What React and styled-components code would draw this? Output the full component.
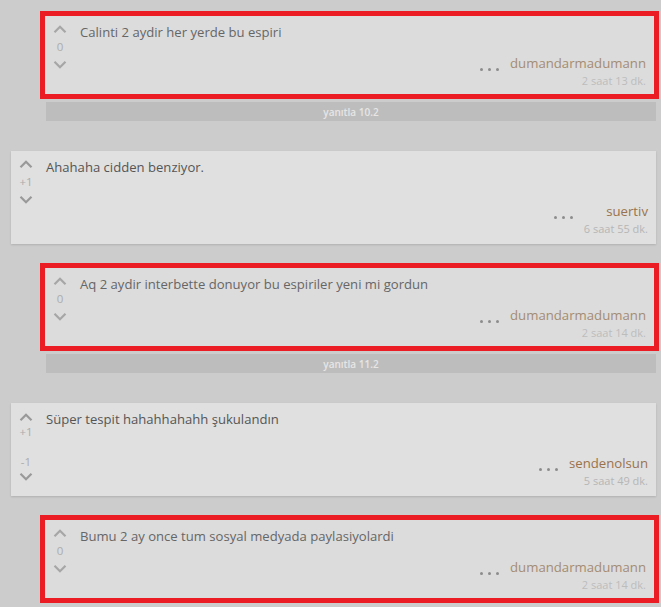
import React from "react";
import styled, { createGlobalStyle } from "styled-components";

const Global = createGlobalStyle`
  html, body { margin: 0; padding: 0; background: #cccccc; }
  body { font-family: "Open Sans", "Noto Sans", sans-serif; }
`;

const Page = styled.div`
  padding: 11px 5px 0 11px;
  display: flex;
  flex-direction: column;
  height: 607px;
  overflow: hidden;
  box-sizing: border-box;
  & > * { flex-shrink: 0; }
`;

const ReplyGroup = styled.div`
  padding-left: 35px;
  margin-bottom: 30px;
  display: flex;
  flex-direction: column;
`;

const Highlight = styled.div`
  margin-left: -6px;
  margin-right: -3px;
  border: 5px solid #ec1c24;
`;

const Card = styled.div`
  display: grid;
  grid-template-columns: 30px 1fr;
  column-gap: 5px;
  background: ${(p) => (p.$reply ? "#dcdcdc" : "#e0e0e0")};
  height: ${(p) => (p.$reply ? "78px" : "93px")};
  box-sizing: border-box;
  padding: 7px 8px 0 0;
  margin-bottom: ${(p) => (p.$reply ? "0" : "19px")};
  box-shadow: ${(p) => (p.$reply ? "none" : "0 1px 2px rgba(0,0,0,0.14)")};
`;

const VoteColumn = styled.div`
  display: flex;
  flex-direction: column;
  align-items: center;
  padding-top: ${(p) => (p.$split ? "2px" : "1px")};
  gap: ${(p) => (p.$split ? "3px" : "6px")};
`;

const Arrow = styled.svg`
  width: 14px;
  height: 10px;
  display: block;
  color: ${(p) => (p.$light ? "#a6a6a6" : "#999999")};
`;

const Count = styled.span`
  font-size: 11.5px;
  line-height: 14px;
  color: #acacac;
`;

const Spacer = styled.div`
  height: 10px;
`;

const Body = styled.div`
  display: flex;
  flex-direction: column;
  min-width: 0;
`;

const Text = styled.p`
  margin: 0;
  font-size: 13.1px;
  line-height: 18px;
  color: ${(p) => (p.$reply ? "#666666" : "#555555")};
`;

const Footer = styled.div`
  display: flex;
  justify-content: flex-end;
  align-items: flex-start;
  gap: 11px;
  margin-top: ${(p) => (p.$reply ? "13px" : "26px")};
`;

const Dots = styled.div`
  display: flex;
  gap: 5px;
  margin-top: 14px;
`;

const Dot = styled.span`
  width: 3px;
  height: 3px;
  border-radius: 50%;
  background: #8c8c8c;
`;

const Meta = styled.div`
  display: flex;
  flex-direction: column;
  align-items: flex-end;
`;

const User = styled.span`
  font-size: 13.2px;
  line-height: 18px;
  color: ${(p) => (p.$reply ? "#a48c72" : "#9a724c")};
`;

const Time = styled.span`
  font-size: 11px;
  line-height: 18px;
  color: ${(p) => (p.$reply ? "#bcbcbc" : "#b6b6b6")};
`;

const ReplyBar = styled.div`
  margin-top: 3px;
  height: 19px;
  background: #bdbdbd;
  display: flex;
  align-items: center;
  justify-content: center;
  font-size: 10px;
  font-weight: 600;
  color: #e6e6e6;
`;

const Up = ({ light }) => (
  <Arrow $light={light} viewBox="0 0 14 10">
    <path d="M1.5 8.2 L7 2.8 L12.5 8.2" fill="none" stroke="currentColor" strokeWidth="2.2" />
  </Arrow>
);
const Down = ({ light }) => (
  <Arrow $light={light} viewBox="0 0 14 10">
    <path d="M1.5 1.8 L7 7.2 L12.5 1.8" fill="none" stroke="currentColor" strokeWidth="2.2" />
  </Arrow>
);

const Comment = ({ reply, text, votes, user, time, split }) => (
  <Card $reply={reply}>
    <VoteColumn $split={split}>
      <Up light={reply} />
      {split ? (
        <>
          <Count>{votes[0]}</Count>
          <Spacer />
          <Count>{votes[1]}</Count>
        </>
      ) : (
        <Count>{votes}</Count>
      )}
      <Down light={reply} />
    </VoteColumn>
    <Body>
      <Text $reply={reply}>{text}</Text>
      <Footer $reply={reply}>
        <Dots>
          <Dot />
          <Dot />
          <Dot />
        </Dots>
        <Meta>
          <User $reply={reply}>{user}</User>
          <Time $reply={reply}>{time}</Time>
        </Meta>
      </Footer>
    </Body>
  </Card>
);

const Reply = ({ label, ...rest }) => (
  <ReplyGroup>
    <Highlight>
      <Comment reply {...rest} />
    </Highlight>
    {label && <ReplyBar>{label}</ReplyBar>}
  </ReplyGroup>
);

export default function App() {
  return (
    <>
      <Global />
      <Page>
        <Reply
          text="Calinti 2 aydir her yerde bu espiri"
          votes="0"
          user="dumandarmadumann"
          time="2 saat 13 dk."
          label="yanıtla 10.2"
        />
        <Comment
          text="Ahahaha cidden benziyor."
          votes="+1"
          user="suertiv"
          time="6 saat 55 dk."
        />
        <Reply
          text="Aq 2 aydir interbette donuyor bu espiriler yeni mi gordun"
          votes="0"
          user="dumandarmadumann"
          time="2 saat 14 dk."
          label="yanıtla 11.2"
        />
        <Comment
          text="Süper tespit hahahhahahh şukulandın"
          votes={["+1", "-1"]}
          split
          user="sendenolsun"
          time="5 saat 49 dk."
        />
        <Reply
          text="Bumu 2 ay once tum sosyal medyada paylasiyolardi"
          votes="0"
          user="dumandarmadumann"
          time="2 saat 14 dk."
        />
      </Page>
    </>
  );
}
